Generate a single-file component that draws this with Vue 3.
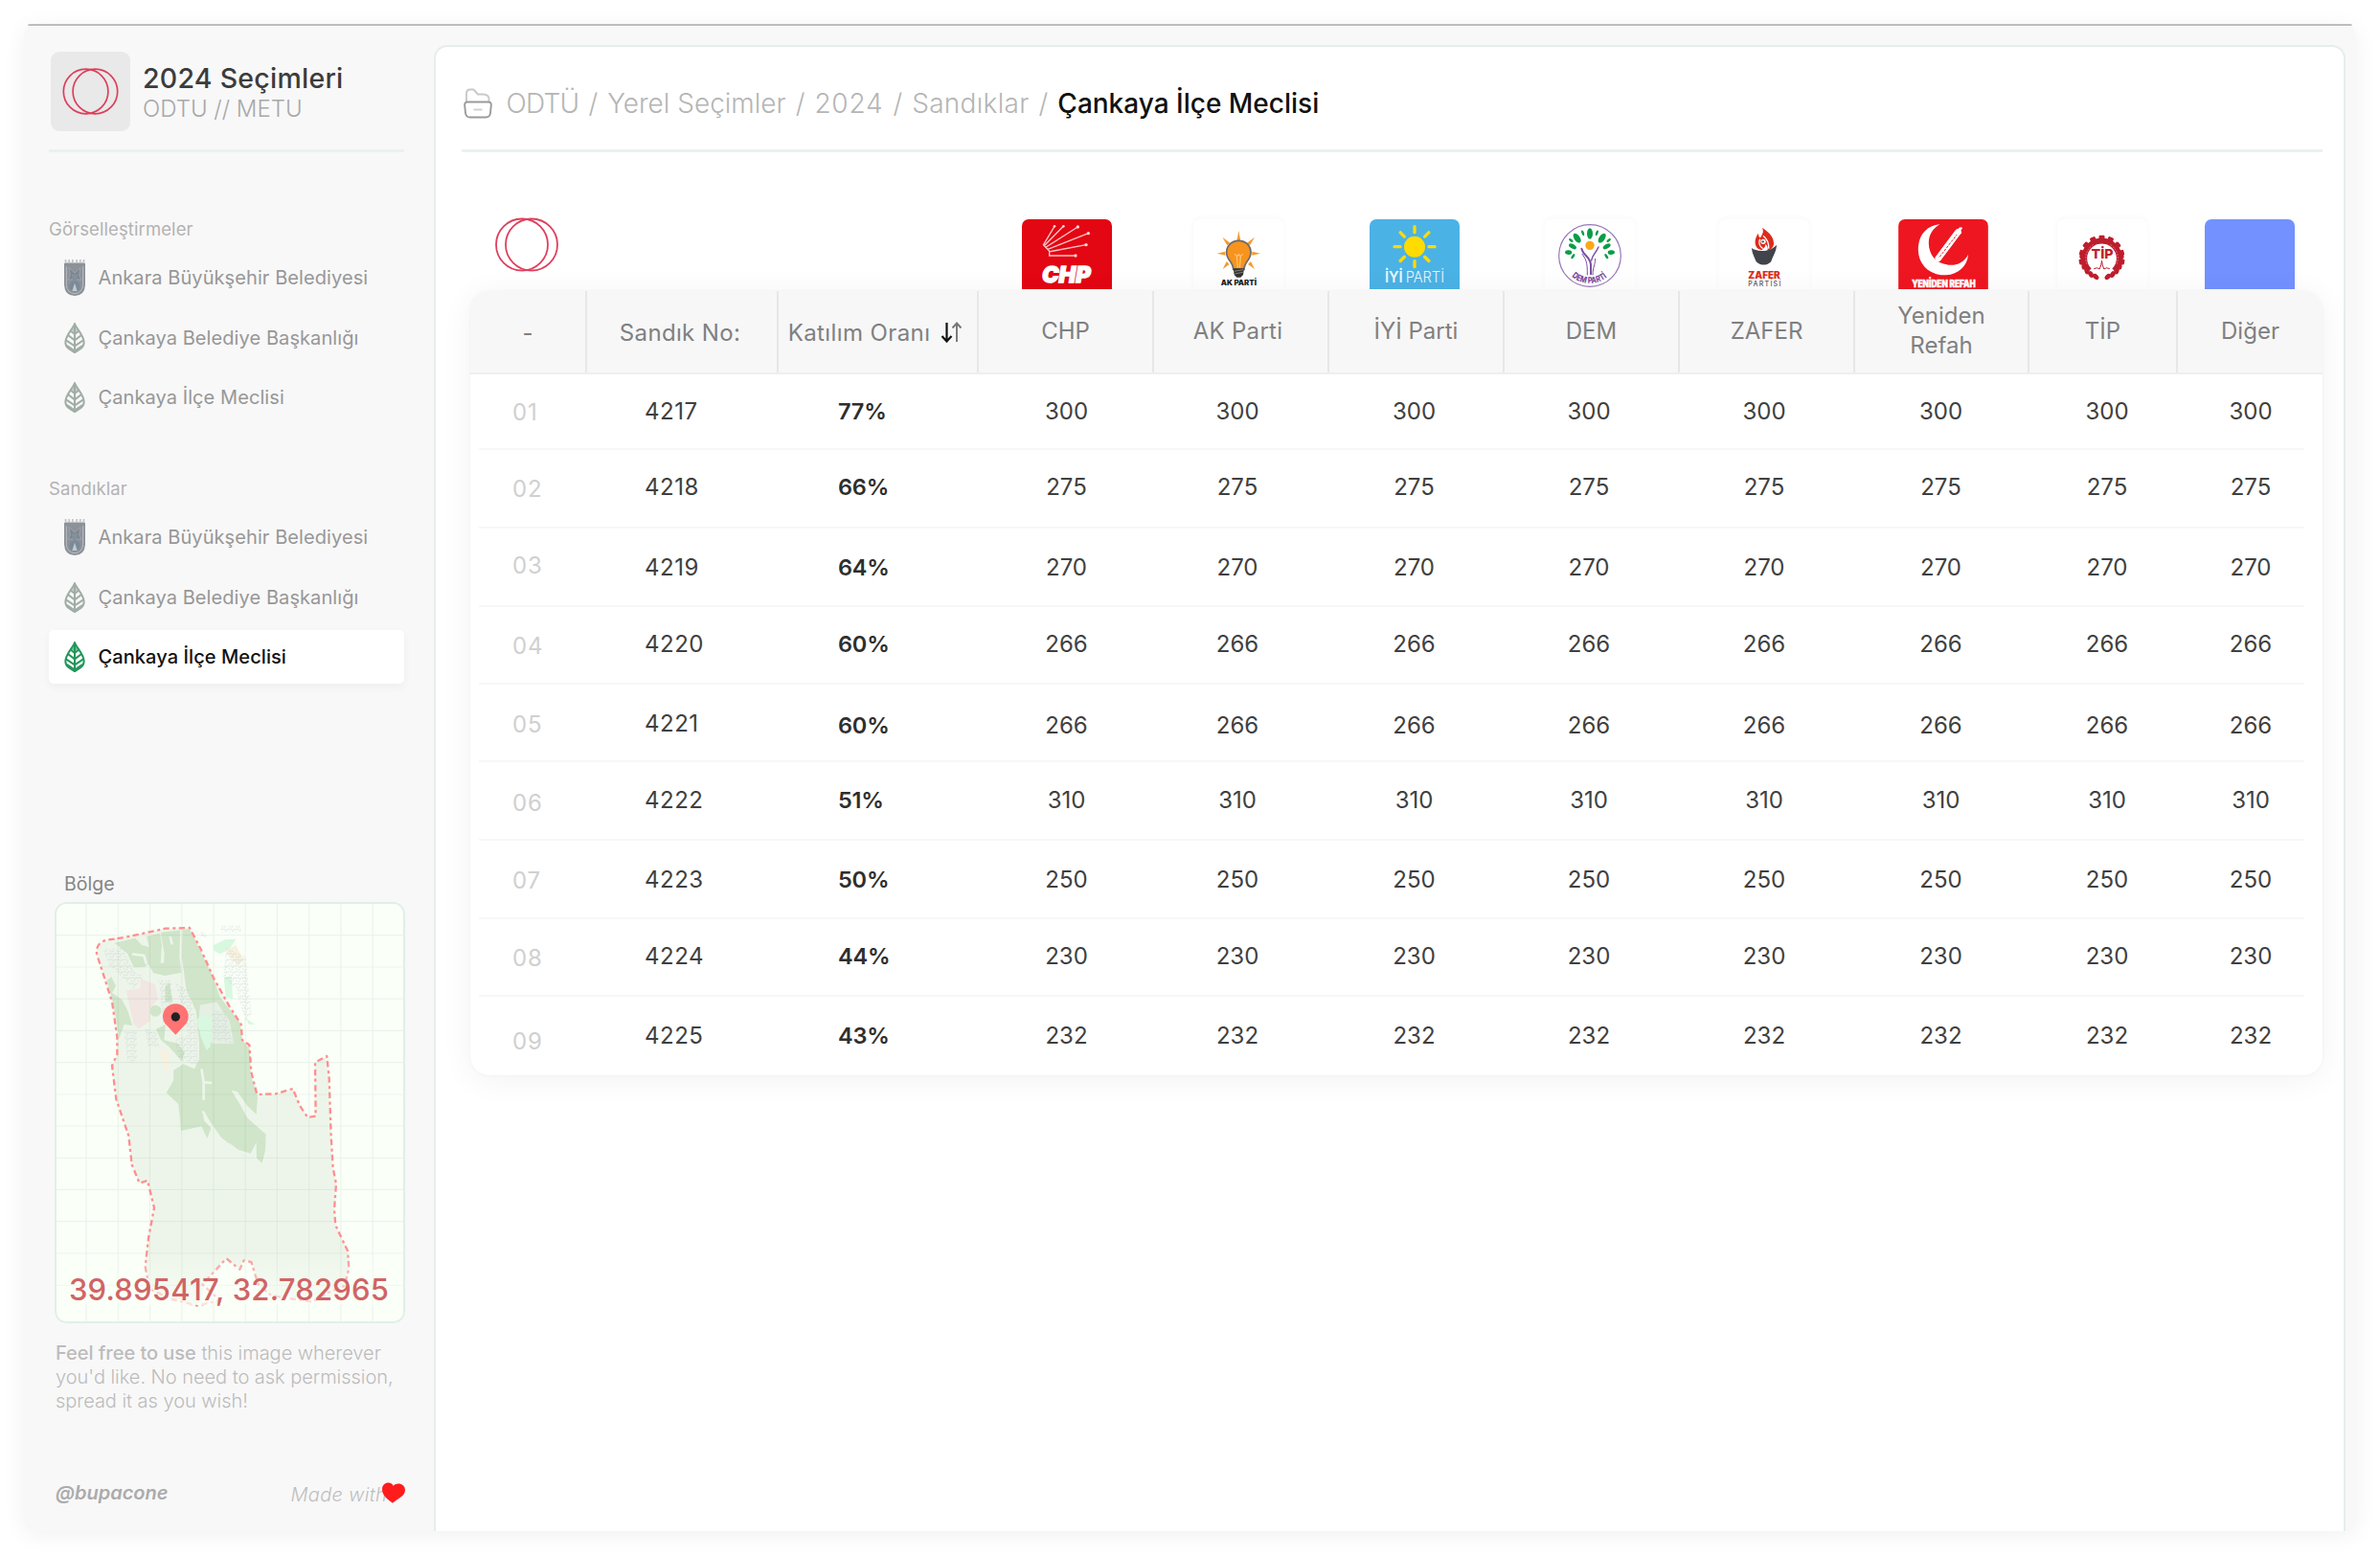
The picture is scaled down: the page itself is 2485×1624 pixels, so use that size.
<script setup>
const navGroups = [
  {
    title: 'Görselleştirmeler',
    items: [
      { icon: 'shield', label: 'Ankara Büyükşehir Belediyesi' },
      { icon: 'leaf', label: 'Çankaya Belediye Başkanlığı' },
      { icon: 'leaf', label: 'Çankaya İlçe Meclisi' },
    ],
  },
  {
    title: 'Sandıklar',
    items: [
      { icon: 'shield', label: 'Ankara Büyükşehir Belediyesi' },
      { icon: 'leaf', label: 'Çankaya Belediye Başkanlığı' },
      { icon: 'leaf', label: 'Çankaya İlçe Meclisi', active: true },
    ],
  },
]

const crumbs = [
  { label: 'ODTÜ', tracking: -0.7 },
  { label: 'Yerel Seçimler', tracking: 0 },
  { label: '2024', tracking: 0.8 },
  { label: 'Sandıklar', tracking: 0.3 },
]
const parties = ['CHP', 'AK Parti', 'İYİ Parti', 'DEM', 'ZAFER', 'Yeniden Refah', 'TİP', 'Diğer']

// h: row height; di, dn, dv: optical shift of the index, box number and values
const rows = [
  { box: '4217', rate: '77%', votes: 300, h: 79, di: 1.5, dn: 0.8, dv: 0.8 },
  { box: '4218', rate: '66%', votes: 275, h: 82, di: 0.5, dn: -1.5, dv: -1.5 },
  { box: '4219', rate: '64%', votes: 270, h: 82, di: -0.6, dn: 0.6, dv: 0.6 },
  { box: '4220', rate: '60%', votes: 266, h: 81, di: 1.2, dn: -0.5, dv: -0.5 },
  { box: '4221', rate: '60%', votes: 266, h: 81, di: 2, dn: 1.5, dv: 3.3 },
  { box: '4222', rate: '51%', votes: 310, h: 82, di: 2.7, dn: 0, dv: 0 },
  { box: '4223', rate: '50%', votes: 250, h: 82, di: 2.3, dn: 0.5, dv: 0.5 },
  { box: '4224', rate: '44%', votes: 230, h: 81, di: 1, dn: -0.8, dv: -0.8 },
  { box: '4225', rate: '43%', votes: 232, h: 81, di: 6, dn: 0.8, dv: 0.8 },
]
const shift = (d) => ({ marginTop: `${d * 2}px` })
const sunRays = [0, 45, 90, 135, 180, 225, 270, 315]
const gearTeeth = Array.from({ length: 9 }, (_, i) => -100 + i * 25)
const laurel = Array.from({ length: 6 }, (_, i) => 18 + i * 16)
</script>

<template>
  <div class="page">
    <div class="window">
      <aside class="sidebar">
        <header class="brand">
          <div class="brand-logo">
            <svg width="59" height="49" viewBox="0 0 59 49" fill="none" stroke="#dc3f5b" stroke-width="1.7">
              <circle cx="24.6" cy="24.5" r="23.3" />
              <circle cx="34.4" cy="24.5" r="23.3" />
            </svg>
          </div>
          <div class="brand-text">
            <div class="brand-title">2024 Seçimleri</div>
            <div class="brand-sub">ODTU // METU</div>
          </div>
        </header>
        <div class="rule"></div>

        <nav v-for="group in navGroups" :key="group.title" class="group">
          <div class="group-title">{{ group.title }}</div>
          <div class="group-items">
            <div v-for="item in group.items" :key="item.label" class="item" :class="{ active: item.active }">
              <svg v-if="item.icon === 'shield'" class="icon" width="22" height="38" viewBox="0 0 66 114">
                <path d="M2 12V0h5v8h6V0h5v8h6V0h5v8h8V0h5v8h6V0h5v8h6V0h5v12z" fill="#c2c4c8" />
                <path d="M0 12H66V80Q64 113 33 114Q2 113 0 80z" fill="#8d9299" />
                <path d="M7 22V80Q9 105 33 107Q57 105 59 80V22" fill="none" stroke="#b9bdc2" stroke-width="3" />
                <path d="M15 26L33 42L51 26L47 50L54 64L40 62L33 72L26 62L12 64L19 50z" fill="#7d858e" stroke="#a9afb6" stroke-width="2" />
                <path d="M23 46h20l-4 20H27z" fill="#80919f" />
                <circle cx="33" cy="84" r="17" fill="#7b8a98" />
                <path d="M33 74L41 99H25z" fill="#c3c9ce" />
              </svg>
              <svg v-else class="icon" width="22" height="34" viewBox="0 0 66 100" fill="none" stroke="currentColor" stroke-width="6" stroke-linejoin="round">
                <path d="M33 5C27 22 4 42 4 64C4 80 20 88 33 95C46 88 62 80 62 64C62 42 39 22 33 5z" />
                <path d="M33 10V96M33 38L21 28M33 38L45 28M33 57L12 41M33 57L54 41M33 75L6 57M33 75L60 57M33 91L9 74M33 91L57 74" />
                <path d="M33 4L43 26L33 34L23 26z" fill="currentColor" fill-opacity=".6" stroke="none" />
              </svg>
              <span>{{ item.label }}</span>
            </div>
          </div>
        </nav>

        <div class="map-title">Bölge</div>
        <div class="map">
          <svg width="366" height="440" viewBox="52 127 1098 1320">
            <defs>
              <linearGradient id="fade" x1="0" y1="0" x2="0" y2="1">
                <stop offset="0" stop-color="#fafff8" stop-opacity="0" />
                <stop offset="1" stop-color="#fafff8" />
              </linearGradient>
              <pattern id="streets" width="22" height="19" patternUnits="userSpaceOnUse">
                <path d="M1 3l5 2M10 1l2 5M15 9l5-2M4 12l4 4M12 15h4M19 2v3" stroke="#aab2b8" stroke-width="2.4" opacity=".6" />
              </pattern>
            </defs>
            <path
              d="M184 290Q180 255 215 246L290 234L400 210L475 208L510 275L550 365L600 455L636 510L640 560L662 575L668 660L686 730L745 728L798 712L820 765L845 802L866 798L868 630L905 610L912 680L918 860L924 960L934 1010L928 1090L932 1140L970 1220L974 1275L960 1330L900 1375L730 1360L690 1325L668 1255L645 1250L632 1278L590 1244L530 1310L500 1390L420 1372L350 1340L336 1270L346 1180L364 1085L343 1000L318 1008L294 950L284 860L245 745L232 640L248 605L248 550L232 440L210 370z"
              fill="#edf5ea"
            />
            <g fill="#d0e5c9">
              <path d="M240 255L305 240L325 262L348 268L340 235L382 225L388 262L384 318L394 318L396 290L384 222L475 212L545 355L570 425L632 505L640 560L664 590L666 670L688 735L684 792L655 765L625 722L605 716L635 765L655 803L714 855L712 905L702 945L685 930L684 880L666 915L628 903L575 865L516 782L520 812L542 835L530 868L512 830L448 844L440 760L402 725L425 685L424 655L455 635L490 650L505 620L505 570L495 470L465 400L450 348L398 358L362 350L346 322L334 330L300 332L280 288z" />
              <path d="M216 372L230 362L244 390L232 412L262 432L280 465L296 515L270 510L254 555L246 500L232 430z" />
              <circle cx="368" cy="468" r="18" />
              <path d="M398 392L412 380L422 440L398 440zM370 525L400 510L395 560L438 570L460 600L450 625L410 580L385 560z" />
              <path d="M516 782L575 865L600 885L570 800L540 740L519 748z" />
            </g>
            <path d="M449 215L447 300L460 400M512 650L519 692L545 694M519 692V748M414 235L420 260M295 290L332 295L340 322M516 782L540 825" fill="none" stroke="#edf5ea" stroke-width="8" />
            <path d="M508 450L560 440L600 500L614 572L545 570L500 520z" fill="#e5efe3" />
            <path d="M276 405L320 398L322 368L366 385L376 430L350 460L352 500L316 524L300 510z" fill="#f1e6e1" />
            <path d="M498 495L520 480L545 488L540 580L528 592L510 550zM550 262L585 245L620 243L600 275L570 290L552 280zM582 362L606 360L610 430L588 425zM650 490L680 512L660 510z" fill="#d8f8df" />
            <path d="M585 280L620 262L645 310L625 325zM378 590L410 595L412 660L400 655z" fill="#f7f1df" />
            <path d="M205 275L265 270L300 345L330 360L300 400L250 350L220 325zM335 520L375 540L380 585L345 580zM430 380L470 400L500 520L500 640L440 620L430 560L470 540zM510 215L530 235L510 240zM572 200h64v22h-64zM590 270L650 300L670 480L650 500L620 400L580 360zM545 470L585 470L610 570L550 560zM380 370h40v140h-30zM270 530h40v100h-30z" fill="url(#streets)" />
            <path
              d="M151 130V1444M251 130V1444M350.500 130V1444M450.500 130V1444M550 130V1444M649.500 130V1444M749 130V1444M849 130V1444M948.500 130V1444M1048.500 130V1444M52 231H1150M52 331H1150M52 430.500H1150M52 530H1150M52 630H1150M52 730H1150M52 829H1150M52 929H1150M52 1028H1150M52 1128H1150M52 1228H1150M52 1328H1150"
              stroke="#5a8a6a" stroke-opacity=".09" stroke-width="3.500" fill="none"
            />
            <path
              d="M240 243L215 246Q180 255 184 290L210 370L232 440L248 550L248 605L232 640L245 745L284 860L294 950L318 1008L343 1000L364 1085L346 1180L336 1270L350 1340L420 1372L500 1392L570 1375L515 1325L590 1244L632 1278L645 1250L668 1255L690 1325L730 1360L860 1380L900 1355L960 1330L974 1275L970 1220L932 1140L928 1090L934 1010L924 960L918 860L912 680L905 610L868 630L870 798L845 802L820 765L798 712L745 728L686 730L668 660L662 575L640 560L636 510L600 455L550 365L510 275L475 208L400 210L290 234z"
              fill="none" stroke="#ff8f8f" stroke-width="7" stroke-dasharray="19 10 9 11" stroke-linejoin="round"
            />
            <rect x="54" y="1220" width="1094" height="170" fill="url(#fade)" fill-opacity=".75" />
            <path d="M431 543L398 508A40 40 0 1 1 464 508z" fill="#ff7373" />
            <circle cx="431" cy="487" r="14" fill="#222" />
          </svg>
          <div class="coords">39.895417, 32.782965</div>
        </div>
        <p class="note">
          <b>Feel free to use</b> this image wherever<br />you'd like. No need to ask permission,<br />spread it as you wish!
        </p>
        <footer class="credit">
          <span class="author">@bupacone</span>
          <span class="made">Made with
            <svg class="heart" width="26" height="24" viewBox="0 0 78 72">
              <path d="M36 68C20 56 3 46 3 24C3 3 30 -3 38 14C50 2 75 8 75 28C75 46 52 54 36 68z" fill="#ff1c1c" />
            </svg>
          </span>
        </footer>
      </aside>

      <main class="panel">
        <div class="crumbs">
          <svg class="folder" width="30" height="32" viewBox="0 0 30 32" fill="none" stroke-width="1.900" stroke-linejoin="round">
            <path d="M3 14V6Q3 1.500 7 1.500H10.500L15 6.500H20Q26.500 6.500 26.500 11.500V14" stroke="#c9c9c9" />
            <path d="M4 14.500H26Q29 14.500 28.800 18L28 26Q27.500 30.500 23 30.500H7Q2.500 30.500 2 26L1.200 18Q1 14.500 4 14.500z" stroke="#9a9a9a" />
            <path d="M10.500 22.500H19.500" stroke="#cfcfcf" />
          </svg>
          <template v-for="c in crumbs" :key="c.label">
            <span :style="{ letterSpacing: c.tracking + 'px' }">{{ c.label }}</span><span class="slash">/</span>
          </template>
          <span class="current">Çankaya İlçe Meclisi</span>
        </div>
        <div class="rule"></div>

        <div class="logos">
          <svg class="rings" width="67" height="57" viewBox="0 0 67 57" fill="none" stroke="#df3f5c" stroke-width="1.800">
            <circle cx="28" cy="28.500" r="27" />
            <circle cx="38" cy="28.500" r="27" />
          </svg>

          <svg class="logo" viewBox="82 56 282 219">
            <rect x="82" y="56" width="282" height="219" fill="#e30613" />
            <g stroke="#fbc7c9" stroke-width="4" fill="none">
              <path d="M150 135L184 78M153 138L212 78M158 143L257 80M163 150L290 100M166 158L283 136M167 170H250M148 135L168 156V172" />
            </g>
            <g fill="#fbd5d6">
              <circle cx="184" cy="78" r="4" /><circle cx="212" cy="78" r="4" /><circle cx="257" cy="80" r="5" />
              <circle cx="290" cy="100" r="5" /><circle cx="283" cy="136" r="5" /><circle cx="250" cy="170" r="5" />
            </g>
            <text x="145" y="253" font-size="70" font-weight="900" font-style="italic" fill="#fff" stroke="#fff" stroke-width="4" textLength="152" lengthAdjust="spacingAndGlyphs">CHP</text>
          </svg>

          <svg class="logo pale" viewBox="620 56 282 219">
            <path d="M762 92L768 124H756zM711 112L735 130L726 138zM812 112L788 130L797 138zM694 163L720 157V169zM830 163L804 157V169zM712 212L724 188L733 197zM812 212L800 188L791 197z" fill="#f59a2e" />
            <path d="M762 123C738 123 724 141 724 160C724 184 745 189 745 213H779C779 189 800 184 800 160C800 141 786 123 762 123z" fill="#f7941d" stroke="#6b6b70" stroke-width="5" />
            <path d="M749 165L757 172L762 166L767 172L775 165M756 172L759 208M768 172L765 208" stroke="#ffc780" stroke-width="3.500" fill="none" />
            <path d="M745 210H779L776 230L768 238H756L748 230z" fill="#333" />
            <path d="M748 219L776 214M750 227L775 222" stroke="#aaa" stroke-width="2" />
            <text x="706" y="264" font-size="21" font-weight="900" fill="#222" textLength="112" lengthAdjust="spacingAndGlyphs">AK PARTİ</text>
          </svg>

          <svg class="logo" viewBox="1169 56 282 219">
            <rect x="1169" y="56" width="282" height="219" fill="#4bb2e5" />
            <circle cx="1310" cy="142" r="33" fill="#ffdb00" />
            <path v-for="a in sunRays" :key="a" d="M1310 97V79" stroke="#ffdb00" stroke-width="10" stroke-linecap="round" :transform="`rotate(${a} 1310 142)`" />
            <text x="1217" y="253" font-size="47" font-weight="600" fill="#eaf8ff" textLength="56" lengthAdjust="spacingAndGlyphs">İYİ</text>
            <text x="1282" y="253" font-size="47" font-weight="300" fill="#eaf8ff" textLength="121" lengthAdjust="spacingAndGlyphs">PARTİ</text>
          </svg>

          <svg class="logo pale" viewBox="220 56 282 219">
            <defs><path id="demArc" d="M292 222A86 86 0 0 0 430 222" /></defs>
            <circle cx="361" cy="170" r="97" fill="#fff" stroke="#9675b8" stroke-width="3.500" />
            <circle cx="361" cy="138" r="14" fill="#fba919" />
            <g fill="#0a9d48">
              <ellipse cx="361" cy="101" rx="9" ry="17" />
              <ellipse cx="321" cy="115" rx="9" ry="17" transform="rotate(-35 321 115)" />
              <ellipse cx="399" cy="115" rx="9" ry="17" transform="rotate(35 399 115)" />
              <ellipse cx="307" cy="141" rx="7" ry="13" transform="rotate(-60 307 141)" />
              <ellipse cx="414" cy="141" rx="7" ry="13" transform="rotate(60 414 141)" />
              <ellipse cx="294" cy="160" rx="7" ry="11" transform="rotate(-85 294 160)" />
              <ellipse cx="428" cy="160" rx="7" ry="11" transform="rotate(85 428 160)" />
              <ellipse cx="339" cy="99" rx="4" ry="9" transform="rotate(-20 339 99)" />
              <ellipse cx="383" cy="99" rx="4" ry="9" transform="rotate(20 383 99)" />
              <ellipse cx="302" cy="122" rx="4" ry="8" transform="rotate(-50 302 122)" />
              <ellipse cx="420" cy="122" rx="4" ry="8" transform="rotate(50 420 122)" />
              <ellipse cx="308" cy="172" rx="4" ry="9" transform="rotate(35 308 172)" />
              <ellipse cx="413" cy="172" rx="4" ry="9" transform="rotate(-35 413 172)" />
            </g>
            <g fill="none" stroke="#7a4fa3" stroke-linecap="round">
              <path d="M335 148C340 170 362 172 364 198V228" stroke-width="6" />
              <path d="M388 143C378 165 368 168 366 185" stroke-width="4.500" />
              <path d="M337 165C348 180 354 190 353 230M378 180C378 200 370 205 370 230" stroke-width="3" />
            </g>
            <text font-size="27" font-weight="800" fill="#7a4fa3"><textPath href="#demArc" startOffset="18" textLength="120" lengthAdjust="spacingAndGlyphs">DEM PARTİ</textPath></text>
          </svg>

          <svg class="logo pale" viewBox="765 56 282 219">
            <path d="M900 82C920 96 938 112 936 135C934 146 926 152 915 156C920 146 916 138 910 134C912 142 904 146 900 152C888 152 876 144 878 122C880 112 884 104 888 100C888 108 890 112 894 114C900 104 906 96 900 82z" fill="#dd2b1c" />
            <path d="M893 118C888 130 892 142 902 148M903 108C914 118 922 128 920 148" stroke="#fff" stroke-width="4" fill="none" />
            <circle cx="903" cy="126" r="8" fill="#fff" />
            <circle cx="902" cy="126" r="3.500" fill="#555" />
            <path d="M867 146C880 158 926 160 945 136C944 155 936 168 930 182C926 204 884 204 878 182C872 168 868 160 867 146z" fill="#41444b" />
            <text x="856" y="241" font-size="30" font-weight="900" fill="#dd2b1c" textLength="100" lengthAdjust="spacingAndGlyphs">ZAFER</text>
            <text x="856" y="266" font-size="21" font-weight="500" fill="#55585e" textLength="102" lengthAdjust="spacing">PARTİSİ</text>
          </svg>

          <svg class="logo" viewBox="65 56 281 219">
            <rect x="65" y="56" width="281" height="219" fill="#ee1620" />
            <path d="M195 72C150 75 127 110 127 150C127 200 165 231 207 231C250 231 280 205 284 166C270 192 245 202 222 199C180 194 160 165 160 130C160 105 172 85 195 72z" fill="#fff" />
            <path d="M190 178L252 96" stroke="#fff" stroke-width="20" stroke-linecap="round" />
            <path d="M190 178L262 84M240 112L260 98M244 104L258 84" stroke="#fff" stroke-width="6" stroke-linecap="round" />
            <path d="M194 174L248 104" stroke="#ee1620" stroke-width="3" stroke-dasharray="8 4" />
            <text x="107" y="268" font-size="29" font-weight="900" fill="#fff" stroke="#fff" stroke-width="1.500" textLength="200" lengthAdjust="spacingAndGlyphs">YENİDEN REFAH</text>
          </svg>

          <svg class="logo pale" viewBox="565 56 281 219">
            <path d="M665 217A55 55 0 1 1 743 217" fill="none" stroke="#bd1e2d" stroke-width="18" />
            <rect v-for="a in gearTeeth" :key="a" x="695" y="106" width="18" height="14" rx="4" fill="#bd1e2d" :transform="`rotate(${a} 704 178)`" />
            <g v-for="a in laurel" :key="a" fill="#bd1e2d">
              <ellipse cx="704" cy="239" rx="11" ry="7.500" :transform="`rotate(${a} 704 178) rotate(25 704 239)`" />
              <ellipse cx="704" cy="239" rx="11" ry="7.500" :transform="`rotate(${-a} 704 178) rotate(-25 704 239)`" />
            </g>
            <path d="M657 196A50 50 0 0 1 680 134M751 196A50 50 0 0 0 728 134" fill="none" stroke="#e7a0a6" stroke-width="2" stroke-dasharray="5 4" />
            <text x="671" y="180" font-size="41" font-weight="800" fill="#bd1e2d" textLength="69" lengthAdjust="spacingAndGlyphs">TİP</text>
            <path d="M679 211Q690 205 697 212Q703 200 704 186Q705 200 711 212Q718 205 729 211" fill="none" stroke="#bd1e2d" stroke-width="3" />
          </svg>

          <div class="logo other"></div>
        </div>

        <section class="table">
          <div class="thead">
            <div class="th">-</div>
            <div class="th">Sandık No:</div>
            <div class="th sort">
              <span>Katılım Oranı</span>
              <svg width="24" height="22" viewBox="0 0 24 22" fill="none">
                <path d="M6.500 1V20M1.500 15L6.500 20.500L11.500 15" stroke="#111" stroke-width="2.200" />
                <path d="M17 21V2M12.500 6.500L17 1.500L21.500 6.500" stroke="#777" stroke-width="1.900" />
              </svg>
            </div>
            <div v-for="p in parties" :key="p" class="th party"><span>{{ p }}</span></div>
          </div>
          <div v-for="(r, i) in rows" :key="r.box" class="row" :style="{ height: r.h + 'px' }">
            <span class="idx" :style="shift(r.di)">0{{ i + 1 }}</span>
            <span class="box" :style="shift(r.dn)">{{ r.box }}</span>
            <span class="rate" :style="shift(r.dv)">{{ r.rate }}</span>
            <span v-for="p in parties" :key="p" class="vote" :style="shift(r.dv)">{{ r.votes }}</span>
          </div>
        </section>
      </main>
    </div>
  </div>
</template>

<style>
body {
  background: #fff;
  overflow: hidden;
}
</style>

<style scoped>
.page {
  box-sizing: border-box;
  width: 2485px;
  height: 1624px;
  padding: 25px;
  font-family: Inter, "Liberation Sans", sans-serif;
  white-space: nowrap;
}
.window {
  position: relative;
  display: flex;
  width: 2435px;
  height: 1574px;
  border-radius: 12px;
  background: #f8f8f8;
  box-shadow: 0 4px 24px rgba(0, 0, 0, 0.06);
}
.window::before {
  content: "";
  position: absolute;
  top: 0;
  left: 4px;
  right: 4px;
  height: 2px;
  border-radius: 2px 2px 0 0;
  background: #bcbcbc;
  box-shadow: 0 1px 0 #fff;
}
.rule {
  height: 3px;
  background: #ebf1f1;
}

.sidebar {
  box-sizing: border-box;
  flex: none;
  width: 428px;
  padding: 29px 31px 0 26px;
}
.brand {
  display: flex;
  align-items: center;
  gap: 13px;
  height: 83px;
  margin-bottom: 19px;
}
.brand-logo {
  display: flex;
  align-items: center;
  justify-content: center;
  width: 83px;
  height: 83px;
  margin-left: 2px;
  border-radius: 9px;
  background: #e9e9e9;
}
.brand-text {
  padding-top: 4px;
  line-height: 32px;
}
.brand-title {
  font-size: 28.5px;
  font-weight: 550;
  letter-spacing: 0.25px;
  color: #3c3c3c;
}
.brand-sub {
  font-size: 24px;
  font-weight: 300;
  color: #a8a8a8;
}
.group {
  padding-top: 68px;
}
.group + .group {
  padding-top: 55.5px;
}
.group-title {
  font-size: 18.5px;
  line-height: 24px;
  letter-spacing: 0.1px;
  color: #b3b3b3;
}
.group-items {
  display: flex;
  flex-direction: column;
  gap: 6.75px;
  margin-top: 11.5px;
}
.item {
  display: flex;
  align-items: center;
  gap: 14px;
  height: 55.5px;
  padding-left: 15.5px;
  border-radius: 5px;
  font-size: 20px;
  letter-spacing: 0.08px;
  color: #979797;
}
.item .icon {
  flex: none;
  color: #a0ada6;
}
.item.active {
  background: #fff;
  box-shadow: 0 4px 10px rgba(0, 0, 0, 0.04);
  font-weight: 500;
  color: #111;
}
.item.active .icon {
  color: #22965a;
}
.map-title {
  margin: 197px 0 7.5px 16px;
  font-size: 19.5px;
  line-height: 24px;
  color: #858585;
}
.map {
  position: relative;
  box-sizing: border-box;
  width: 366px;
  height: 440px;
  margin-left: 6px;
  border-radius: 12px;
  overflow: hidden;
  background: #fafff8;
}
.map svg {
  display: block;
}
.map::after {
  content: "";
  position: absolute;
  inset: 0;
  border: 2px solid #e2eee9;
  border-radius: 12px;
}
.coords {
  position: absolute;
  left: 0;
  right: 2px;
  bottom: 17px;
  text-align: center;
  font-size: 31px;
  font-weight: 450;
  line-height: 36px;
  letter-spacing: 0.2px;
  color: #d06464;
}
.note {
  margin: 18.5px 0 0 7px;
  font-size: 20px;
  font-weight: 300;
  line-height: 25.3px;
  letter-spacing: -0.03px;
  color: #bcbcbc;
}
.note b {
  font-weight: 500;
}
.credit {
  display: flex;
  justify-content: space-between;
  margin: 71px 0 0 7px;
  font-size: 20px;
  font-style: italic;
  line-height: 24px;
}
.author {
  font-weight: 600;
  color: #ababab;
}
.made {
  position: relative;
  padding: 2px 18px 0 0;
  font-weight: 300;
  letter-spacing: 0.3px;
  color: #bfbfbf;
}
.heart {
  position: absolute;
  right: -2px;
  top: 0;
}

.panel {
  box-sizing: border-box;
  width: 1996px;
  margin-top: 22px;
  padding: 0 22px 0 27px;
  border: 2px solid #e6eeed;
  border-bottom: 0;
  border-radius: 14px 14px 0 0;
  background: #fff;
}
.crumbs {
  display: flex;
  align-items: center;
  height: 96px;
  padding-top: 11px;
  font-size: 28px;
  font-weight: 300;
  color: #b5b5b5;
}
.folder {
  margin: 0 14.5px 0 2px;
}
.slash {
  margin: 0 10px;
}
.current {
  font-weight: 500;
  color: #111;
}
.logos {
  display: grid;
  grid-template-columns: 549px 179px 184px 183px 182px 187px 166px 154px 94px;
  margin: 70px 0 2px 36px;
  height: 73px;
}
.logo {
  width: 94px;
  height: 73px;
  border-radius: 7px 7px 0 0;
  background: #fff;
}
.pale {
  box-shadow: 0 -1px 6px rgba(0, 0, 0, 0.035);
}
.other {
  background: #7391ff;
}
.rings {
  margin: -2px 0 0 -1px;
}
.table {
  position: relative;
  width: 1934px;
  height: 819px;
  margin-left: 9px;
  border-radius: 20px;
  background: #fff;
  box-shadow: 0 4px 34px rgba(0, 0, 0, 0.055), 0 0 3px rgba(0, 0, 0, 0.05);
  font-size: 24px;
}
.thead {
  display: grid;
  grid-template-columns: 122px 200px 209px repeat(5, 183px) 182px 155px 151px;
  box-sizing: border-box;
  height: 87px;
  border-bottom: 2px solid #efefef;
  border-radius: 20px 20px 0 0;
  background: #f7f7f7;
  color: #808080;
}
.th {
  display: flex;
  align-items: center;
  justify-content: center;
  padding-top: 1px;
  border-right: 2px solid #e7e7e7;
}
.th:last-child {
  border-right: 0;
}
.th:nth-child(2) {
  padding-right: 4px;
  letter-spacing: 0.35px;
}
.sort {
  gap: 11px;
  padding-right: 4px;
  letter-spacing: 0.4px;
}
.party {
  padding: 0 24px 3px;
  text-align: center;
  line-height: 31px;
  white-space: normal;
}
.party:nth-child(5) {
  padding: 0 30px 3px 24px;
  letter-spacing: 0.3px;
  white-space: nowrap;
}
.row {
  display: grid;
  grid-template-columns: 173px 202px 146px 185px 172px 197px 168px 198px 171px 176px 124px;
  align-items: center;
  box-sizing: border-box;
  width: 1906px;
  margin-left: 9px;
  border-bottom: 2px solid #f7f7f7;
  line-height: 30px;
  color: #404040;
}
.row:last-child {
  border-bottom: 0;
}
.idx {
  padding-left: 35px;
  letter-spacing: 0.8px;
  color: #d0d0d0;
}
.box {
  letter-spacing: 0.5px;
}
.rate {
  font-size: 23.5px;
  font-weight: 600;
  letter-spacing: -0.2px;
  color: #2e2e2e;
}
.vote {
  text-align: center;
}
</style>
